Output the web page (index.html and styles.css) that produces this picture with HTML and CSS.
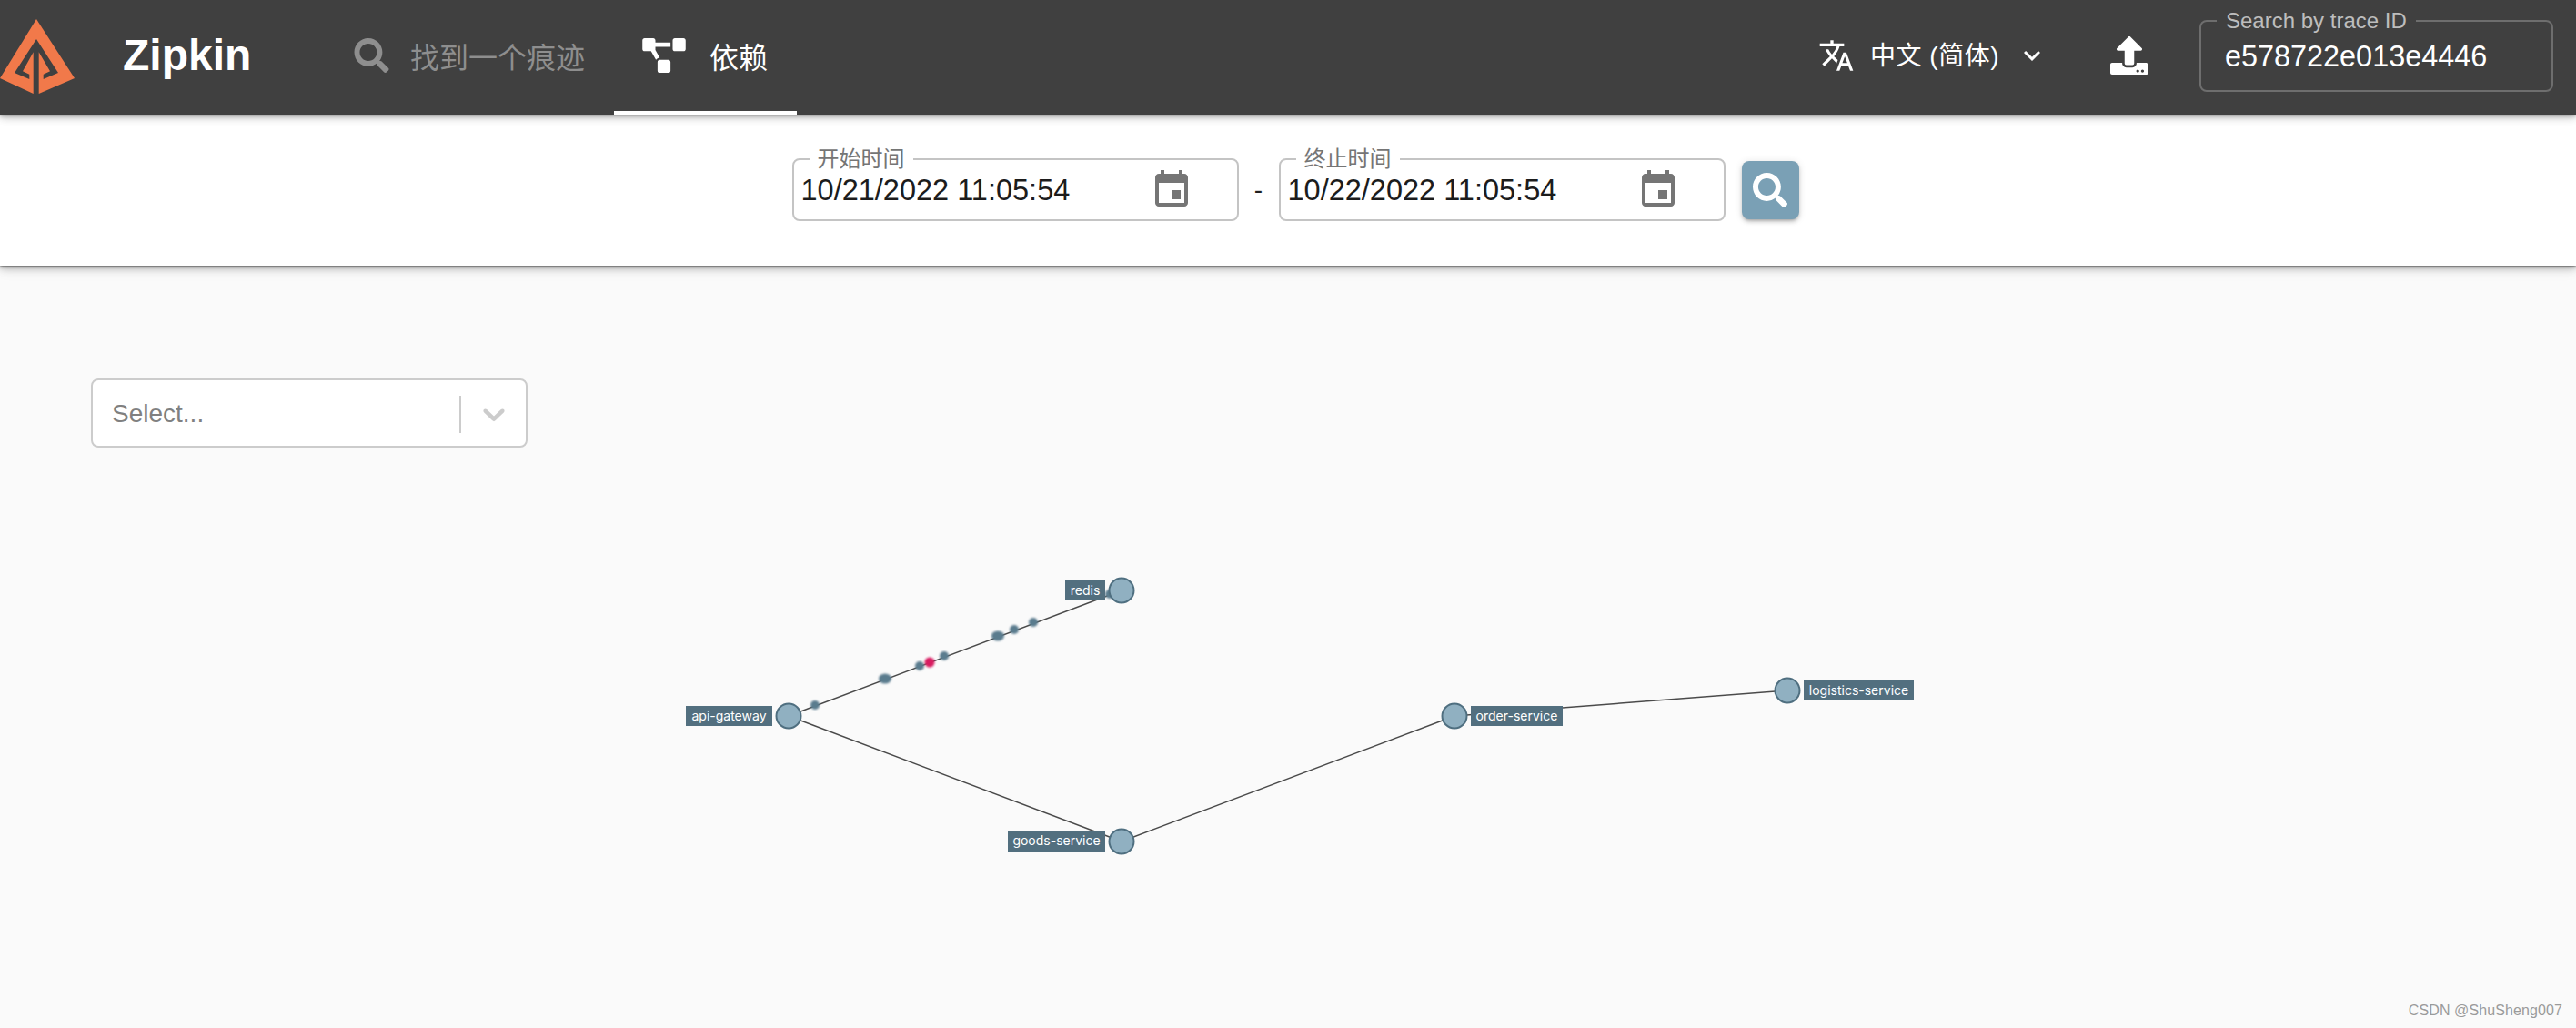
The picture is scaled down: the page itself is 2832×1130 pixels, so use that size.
FILE: index.html
```html
<!DOCTYPE html>
<html lang="zh">
<head>
<meta charset="utf-8">
<title>Zipkin</title>
<link rel="stylesheet" href="styles.css">
</head>
<body>
<header class="topbar">
  <svg class="logo" viewBox="0 0 82 104"><path class="logo-outer" d="M40 21 82 86 42.700 103H36.700L0 86z"/><path class="logo-inner" d="M40 43 16 80 32.300 87V81.700L25 78.300 36.700 57.300V103H42.700V57.300L55 78.300 47.700 81.700V87L64 80z"/></svg>
  <div class="brand">Zipkin</div>
  <nav class="tabs">
    <a class="tab">
      <svg class="tab-icon search-icon" viewBox="0 0 512 512"><path d="M505 442.700 405.300 343c-4.500-4.500-10.600-7-17-7H372c27.600-35.300 44-79.700 44-128C416 93.100 322.900 0 208 0S0 93.100 0 208s93.100 208 208 208c48.300 0 92.700-16.400 128-44v16.300c0 6.400 2.500 12.500 7 17l99.700 99.700c9.400 9.400 24.600 9.400 33.900 0l28.300-28.300c9.400-9.400 9.400-24.600.1-34zM208 336c-70.700 0-128-57.200-128-128 0-70.700 57.200-128 128-128 70.700 0 128 57.200 128 128 0 70.700-57.200 128-128 128z"/></svg>
      <span>找到一个痕迹</span>
    </a>
    <a class="tab tab-active">
      <svg class="tab-icon diagram-icon" viewBox="0 0 640 512"><path d="M384 320H256c-17.670 0-32 14.330-32 32v128c0 17.670 14.330 32 32 32h128c17.670 0 32-14.330 32-32V352c0-17.670-14.330-32-32-32zM192 32c0-17.670-14.330-32-32-32H32C14.330 0 0 14.330 0 32v128c0 17.670 14.330 32 32 32h95.720l73.160 128.040C211.980 300.980 232.400 288 256 288h.28L192 175.510V128h224V64H192V32zM608 0H480c-17.670 0-32 14.330-32 32v128c0 17.670 14.330 32 32 32h128c17.670 0 32-14.330 32-32V32c0-17.670-14.330-32-32-32z"/></svg>
      <span>依赖</span>
    </a>
  </nav>
  <div class="actions">
    <div class="lang">
      <svg class="lang-icon" viewBox="0 0 24 24"><path d="M12.870 15.070l-2.540-2.510.03-.03c1.740-1.940 2.980-4.170 3.710-6.530H17V4h-7V2H8v2H1v1.990h11.170C11.500 7.920 10.440 9.750 9 11.350 8.070 10.320 7.300 9.190 6.690 8h-2c.73 1.630 1.730 3.170 2.980 4.560l-5.090 5.020L4 19l5-5 3.110 3.110.76-2.040zM18.500 10h-2L12 22h2l1.120-3h4.750L21 22h2l-4.500-12zm-2.620 7l1.620-4.330L19.120 17h-3.240z"/></svg>
      <span class="lang-text">中文 (简体)</span>
      <svg class="lang-caret" viewBox="0 0 24 24"><path d="M16.590 8.590 12 13.170 7.410 8.590 6 10l6 6 6-6z"/></svg>
    </div>
    <svg class="upload-icon" viewBox="0 0 512 512"><path d="M296 384h-80c-13.300 0-24-10.700-24-24V192h-87.700c-17.800 0-26.700-21.500-14.100-34.100L242.300 5.700c7.500-7.500 19.800-7.500 27.300 0l152.200 152.200c12.600 12.600 3.700 34.100-14.100 34.100H320v168c0 13.300-10.700 24-24 24zm216-8v112c0 13.300-10.700 24-24 24H24c-13.300 0-24-10.700-24-24V376c0-13.300 10.700-24 24-24h136v8c0 30.900 25.100 56 56 56h80c30.900 0 56-25.100 56-56v-8h136zm-124 88c0-11-9-20-20-20s-20 9-20 20 9 20 20 20 20-9 20-20zm64 0c0-11-9-20-20-20s-20 9-20 20 9 20 20 20 20-9 20-20z"/></svg>
    <div class="trace-field">
      <span class="trace-legend">Search by trace ID</span>
      <span class="trace-value">e578722e013e4446</span>
    </div>
  </div>
</header>

<section class="filters">
  <div class="date-field">
    <span class="date-legend">开始时间</span>
    <span class="date-value">10/21/2022 11:05:54</span>
    <svg class="cal-icon" viewBox="0 0 24 24"><path d="M17 12h-5v5h5v-5zM16 1v2H8V1H6v2H5c-1.110 0-1.990.9-1.990 2L3 19c0 1.100.89 2 2 2h14c1.100 0 2-.9 2-2V5c0-1.100-.9-2-2-2h-1V1h-2zm3 18H5V8h14v11z"/></svg>
  </div>
  <span class="dash">-</span>
  <div class="date-field">
    <span class="date-legend">终止时间</span>
    <span class="date-value">10/22/2022 11:05:54</span>
    <svg class="cal-icon" viewBox="0 0 24 24"><path d="M17 12h-5v5h5v-5zM16 1v2H8V1H6v2H5c-1.110 0-1.990.9-1.990 2L3 19c0 1.100.89 2 2 2h14c1.100 0 2-.9 2-2V5c0-1.100-.9-2-2-2h-1V1h-2zm3 18H5V8h14v11z"/></svg>
  </div>
  <button class="go-btn"><svg class="go-icon" viewBox="0 0 512 512"><path d="M505 442.700 405.300 343c-4.500-4.500-10.600-7-17-7H372c27.600-35.300 44-79.700 44-128C416 93.100 322.900 0 208 0S0 93.100 0 208s93.100 208 208 208c48.300 0 92.700-16.400 128-44v16.300c0 6.400 2.500 12.500 7 17l99.700 99.700c9.400 9.400 24.600 9.400 33.900 0l28.300-28.300c9.400-9.400 9.400-24.600.1-34zM208 336c-70.700 0-128-57.200-128-128 0-70.700 57.200-128 128-128 70.700 0 128 57.200 128 128 0 70.700-57.200 128-128 128z"/></svg></button>
</section>

<main class="content">
  <div class="select">
    <span class="select-placeholder">Select...</span>
    <span class="select-sep"></span>
    <svg class="select-caret" viewBox="0 0 20 20"><path d="M4.516 7.548c.436-.446 1.043-.481 1.576 0L10 11.295l3.908-3.747c.533-.481 1.141-.446 1.576 0 .436.445.408 1.197 0 1.615-.406.418-4.695 4.502-4.695 4.502a1.095 1.095 0 0 1-1.580 0S4.922 9.581 4.514 9.163s-.436-1.170 0-1.615z"/></svg>
  </div>
  <svg class="graph" viewBox="0 492 2832 638">
    <defs><filter id="soft" x="-50%" y="-50%" width="200%" height="200%"><feGaussianBlur stdDeviation="1"/></filter></defs>
    <g class="edges">
      <line x1="867" y1="787" x2="1233" y2="649"/>
      <line x1="867" y1="787" x2="1233" y2="925"/>
      <line x1="1233" y1="925" x2="1599" y2="787"/>
      <line x1="1599" y1="787" x2="1965" y2="759"/>
    </g>
    <g class="particles" filter="url(#soft)">
      <circle cx="896" cy="775" r="5"/>
      <ellipse cx="973" cy="746" rx="7" ry="5.500"/>
      <circle cx="1011" cy="732" r="5"/>
      <circle cx="1038" cy="721" r="5"/>
      <ellipse cx="1097" cy="699" rx="7" ry="5.500"/>
      <circle cx="1115" cy="692" r="5"/>
      <circle cx="1136" cy="684" r="5"/>
      <circle cx="1220" cy="653" r="5"/>
      <circle class="particle-hot" cx="1022" cy="728" r="5.500"/>
    </g>
    <g class="nodes">
      <circle cx="867" cy="787" r="13.500"/>
      <circle cx="1233" cy="649" r="13.500"/>
      <circle cx="1233" cy="925" r="13.500"/>
      <circle cx="1599" cy="787" r="13.500"/>
      <circle cx="1965" cy="759" r="13.500"/>
    </g>
    <g class="labels">
      <rect x="754" y="776" width="95" height="22"/><text x="801.500" y="792">api-gateway</text>
      <rect x="1171" y="638" width="44" height="22"/><text x="1193" y="654">redis</text>
      <rect x="1108" y="913" width="107" height="23"/><text x="1161.500" y="929">goods-service</text>
      <rect x="1617" y="776" width="101" height="22"/><text x="1667.500" y="792">order-service</text>
      <rect x="1983" y="748" width="121" height="22"/><text x="2043.500" y="764">logistics-service</text>
    </g>
  </svg>
  <span class="watermark">CSDN @ShuSheng007</span>
</main>
</body>
</html>
```

FILE: styles.css
```css
* { box-sizing: border-box; }
html, body { margin: 0; height: 100%; overflow: hidden; }
body {
  background: #fafafa;
  font-family: "Liberation Sans", "Noto Sans CJK SC", sans-serif;
  color: #1f1f1f;
}
.topbar {
  position: relative;
  z-index: 2;
  display: flex;
  align-items: center;
  height: 126px;
  background: #404040;
  color: #fff;
  box-shadow: 0 2px 4px rgba(0, 0, 0, .2), 0 4px 8px rgba(0, 0, 0, .14), 0 1px 12px rgba(0, 0, 0, .12);
}
.logo { width: 82px; height: 104px; flex: none; align-self: flex-start; }
.logo-outer { fill: #f1794a; }
.logo-inner { fill: #404040; }
.brand { margin-left: 53px; width: 222px; font-size: 48px; font-weight: 700; line-height: 1; padding-bottom: 4px; }
.tabs { display: flex; align-self: stretch; }
.tab {
  display: flex;
  align-items: center;
  padding: 0 32px;
  border-bottom: 4px solid transparent;
  color: #8e8e8e;
  font-size: 32px;
}
.tab-active { color: #fff; border-bottom-color: #fff; padding: 0 32px 0 31px; }
.tab-icon { fill: currentColor; height: 38px; margin-right: 23px; }
.search-icon { width: 39px; }
.diagram-icon { width: 48px; margin-right: 26px; }
.actions { display: flex; align-items: center; margin-left: auto; padding-right: 25px; padding-bottom: 4px; }
.lang { display: flex; align-items: center; }
.lang-icon { width: 40px; height: 40px; fill: #fff; }
.lang-text { margin-left: 17px; font-size: 28px; line-height: 40px; letter-spacing: .5px; position: relative; top: 1px; }
.lang-caret { width: 36px; height: 36px; fill: #fff; margin-left: 18px; }
.upload-icon { width: 42px; height: 42px; fill: #fff; margin-left: 68px; }
.trace-field {
  position: relative;
  display: flex;
  align-items: center;
  width: 389px;
  height: 79px;
  margin-left: 56px;
  padding: 3px 0 0 26px;
  border: 2px solid #6e6e6e;
  border-radius: 8px;
}
.trace-legend {
  position: absolute;
  left: 17px;
  top: -15px;
  padding: 0 10px;
  background: #404040;
  color: #bdbdbd;
  font-size: 24px;
  line-height: 28px;
}
.trace-value { font-size: 32.4px; }
.filters {
  position: relative;
  z-index: 1;
  display: flex;
  align-items: center;
  justify-content: center;
  height: 166px;
  padding: 48px 0 49px 16px;
  background: #fff;
  box-shadow: 0 1px 3px rgba(0, 0, 0, .55), 0 3px 8px rgba(0, 0, 0, .25), 0 6px 14px rgba(0, 0, 0, .06);
}
.date-field {
  position: relative;
  display: flex;
  align-items: center;
  justify-content: space-between;
  width: 491px;
  height: 69px;
  padding: 0 6px 0 8px;
  border: 2px solid #c4c4c4;
  border-radius: 8px;
}
.date-legend {
  position: absolute;
  left: 17px;
  top: -13px;
  padding: 0 9px;
  background: #fff;
  color: #757575;
  font-size: 24px;
  line-height: 24px;
}
.date-value { font-size: 32.5px; color: #1c1c1c; position: relative; top: 1px; }
.cal-icon { width: 48px; height: 48px; fill: #757575; margin-right: 42px; }
.dash { width: 44px; text-align: center; font-size: 28px; }
.go-btn {
  display: flex;
  align-items: center;
  justify-content: center;
  width: 63px;
  height: 64px;
  margin-left: 18px;
  padding: 0;
  border: 0;
  border-radius: 8px;
  background: #7aa0b5;
  box-shadow: 0 3px 3px -2px rgba(0, 0, 0, .2), 0 3px 4px rgba(0, 0, 0, .14), 0 1px 8px rgba(0, 0, 0, .12);
}
.go-icon { width: 38px; height: 38px; fill: #fff; }
.content { position: relative; height: 838px; padding-top: 124px; }
.select {
  display: flex;
  align-items: center;
  width: 480px;
  height: 76px;
  margin-left: 100px;
  padding: 2px 0 0 21px;
  background: #fff;
  border: 2px solid #ccc;
  border-radius: 8px;
}
.select-placeholder { flex: 1; font-size: 28px; color: #808080; }
.select-sep { width: 2px; height: 41px; background: #ccc; margin-left: -2px; }
.select-caret { width: 40px; height: 40px; fill: #ccc; margin: 0 15px 0 16px; }
.graph { display: block; width: 2832px; height: 638px; }
.edges line { stroke: #4a4a4a; stroke-width: 1.5; }
.particles { fill: #5a7b8e; }
.particle-hot { fill: #d81b60; }
.nodes circle { fill: #90b0c1; stroke: #4f6f80; stroke-width: 2; }
.labels rect { fill: #526f7f; }
.labels text { fill: #fff; font-family: Inter, sans-serif; font-size: 14px; text-anchor: middle; }
.watermark { position: absolute; right: 15px; bottom: 9px; font-size: 16px; line-height: 20px; letter-spacing: .1px; color: #9a9a9a; }
```
